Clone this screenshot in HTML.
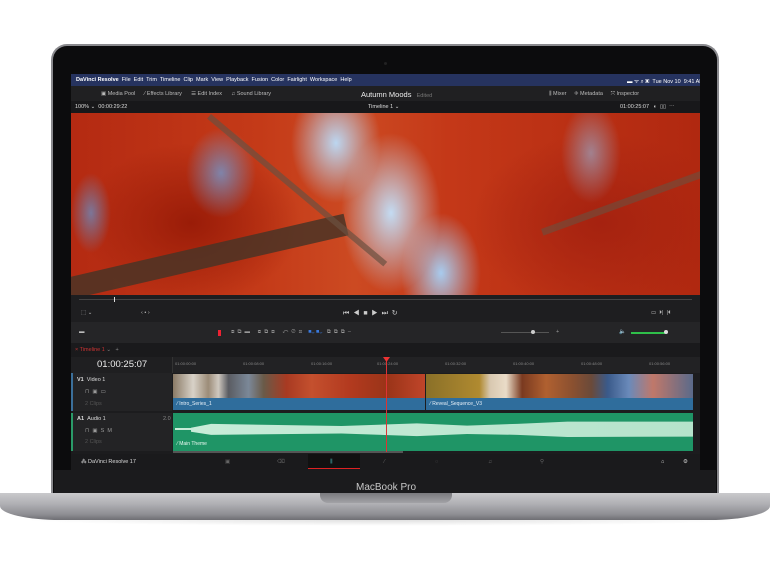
<!DOCTYPE html>
<html><head><meta charset="utf-8"><style>
*{margin:0;padding:0;box-sizing:border-box}
body{width:770px;height:578px;background:#fff;position:relative;overflow:hidden;font-family:"Liberation Sans",sans-serif;}
.a{position:absolute}
.t{position:absolute;font-size:5.5px;color:#bbb;white-space:nowrap}
</style></head><body>
<div class="a" style="left:51px;top:44px;width:668px;height:452px;border-radius:16px 16px 0 0;background:#0c0c0d;border:2px solid #8a8a8e;border-bottom:none"></div>
<div class="a" style="left:54px;top:470px;width:662px;height:24px;background:#1b1b1d"></div>
<div class="a" style="left:384px;top:62px;width:3px;height:3px;border-radius:50%;background:#222"></div>
<div class="t" style="left:356px;top:482px;font-size:10px;color:#c8c8c8">MacBook Pro</div>
<div class="a" style="left:0;top:493px;width:770px;height:27px;background:linear-gradient(#c9c9cc,#b0b0b4 40%,#8d8d92 80%,#6e6e73);border-radius:0 0 60px 60px/0 0 14px 14px"></div>
<div class="a" style="left:320px;top:493px;width:132px;height:10px;background:linear-gradient(#7a7a7e,#a2a2a6);border-radius:0 0 8px 8px"></div>
<div class="a" style="left:20px;top:520px;width:730px;height:6px;background:radial-gradient(ellipse at center top,rgba(0,0,0,.12),rgba(0,0,0,0) 70%)"></div>
<div class="a" style="left:71px;top:74px;width:629px;height:396px;background:#1c1c1e;overflow:hidden">
 <div class="a" style="left:0;top:0;width:629px;height:12px;background:#26335f"></div>
 <div class="t" style="left:5px;top:3px;color:#fff"> <b>DaVinci Resolve</b>&nbsp; File&nbsp; Edit&nbsp; Trim&nbsp; Timeline&nbsp; Clip&nbsp; Mark&nbsp; View&nbsp; Playback&nbsp; Fusion&nbsp; Color&nbsp; Fairlight&nbsp; Workspace&nbsp; Help</div>
 <div class="t" style="left:556px;top:3px;color:#fff">▬ ᯤ ⌕ ▣ &nbsp;Tue Nov 10 &nbsp;9:41 AM</div>
 <div class="a" style="left:0;top:12px;width:629px;height:15px;background:#202022"></div>
 <div class="t" style="left:30px;top:17px">▣ Media Pool &nbsp;&nbsp;&nbsp;&nbsp; ⁄ Effects Library &nbsp;&nbsp;&nbsp;&nbsp; ☰ Edit Index &nbsp;&nbsp;&nbsp;&nbsp; ♫ Sound Library</div>
 <div class="t" style="left:290px;top:16px;font-size:7.5px;color:#eee">Autumn Moods <span style="font-size:5.5px;color:#777">&nbsp; Edited</span></div>
 <div class="t" style="left:478px;top:17px">⫼ Mixer &nbsp;&nbsp;&nbsp; ◈ Metadata &nbsp;&nbsp;&nbsp; ⤧ Inspector</div>
 <div class="a" style="left:0;top:27px;width:629px;height:12px;background:#18181a"></div>
 <div class="t" style="left:4px;top:30px;color:#ddd">100% ⌄ &nbsp;00:00:29:22</div>
 <div class="t" style="left:297px;top:30px;color:#ddd">Timeline 1 ⌄</div>
 <div class="t" style="left:549px;top:30px;color:#ddd">01:00:25:07 &nbsp;&nbsp;◐ &nbsp;▯▯ &nbsp;⋯</div>
 <div class="a" style="left:0;top:39px;width:629px;height:182px;background:
  radial-gradient(ellipse 45px 60px at 265px 30px,#bcd6f0,rgba(160,195,235,0)),
  radial-gradient(ellipse 50px 80px at 320px 100px,#c4dbf2,rgba(140,185,232,0)),
  radial-gradient(ellipse 40px 60px at 370px 160px,#a8cbee,rgba(120,170,225,0)),
  radial-gradient(ellipse 35px 45px at 150px 60px,rgba(110,160,220,.75),rgba(0,0,0,0)),
  radial-gradient(ellipse 30px 50px at 520px 40px,rgba(150,185,225,.6),rgba(0,0,0,0)),
  radial-gradient(ellipse 20px 40px at 20px 100px,rgba(100,150,210,.7),rgba(0,0,0,0)),
  radial-gradient(ellipse 110px 80px at 120px 110px,#9a1c08,rgba(160,30,10,0)),
  radial-gradient(ellipse 130px 90px at 530px 110px,#a52210,rgba(170,35,12,0)),
  linear-gradient(90deg,#b42a12,#c43a18 30%,#cc4a22 45%,#c43818 60%,#b02810)"></div>
 <div class="a" style="left:-10px;top:205px;width:290px;height:22px;background:#4a3426;transform:rotate(-13deg);transform-origin:0 0;opacity:.85"></div>
 <div class="a" style="left:140px;top:40px;width:230px;height:6px;background:#6b5040;transform:rotate(40deg);transform-origin:0 0;opacity:.7"></div>
 <div class="a" style="left:470px;top:155px;width:170px;height:7px;background:#6b5040;transform:rotate(-20deg);transform-origin:0 0;opacity:.6"></div>
 <div class="a" style="left:0;top:221px;width:629px;height:27px;background:#1e1e20"></div>
 <div class="a" style="left:8px;top:225px;width:613px;height:1px;background:#444"></div>
 <div class="a" style="left:43px;top:223px;width:1px;height:5px;background:#ddd"></div>
 <div class="t" style="left:10px;top:236px">⬚ ⌄</div><div class="t" style="left:70px;top:236px">‹ • ›</div>
 <div class="t" style="left:272px;top:235px;font-size:7px;color:#ccc">⏮ &nbsp;◀ &nbsp;■ &nbsp;▶ &nbsp;⏭ &nbsp;↻</div>
 <div class="t" style="left:580px;top:236px">▭ &nbsp;⏵| &nbsp;|⏴</div>
 <div class="a" style="left:0;top:248px;width:629px;height:21px;background:#252527"></div>
 <div class="t" style="left:8px;top:255px">▬</div>
 <div class="a" style="left:147px;top:256px;width:3px;height:6px;background:#e23"></div>
 <div class="t" style="left:160px;top:255px;color:#999">⧈ &nbsp;⧉ &nbsp;▬ &nbsp;&nbsp;&nbsp; ⧈ &nbsp;⧉ &nbsp;⧈ &nbsp;&nbsp;&nbsp; ↶ &nbsp;⊘ &nbsp;⊡ &nbsp;&nbsp;&nbsp;<span style="color:#3a7be0">■⌄ ■⌄</span> &nbsp;&nbsp;⧉ &nbsp;⧉ &nbsp;⧉ &nbsp;–</div>
 <div class="t" style="left:485px;top:255px;color:#999">+</div>
 <div class="a" style="left:430px;top:258px;width:48px;height:1px;background:#555"></div>
 <div class="a" style="left:460px;top:256px;width:4px;height:4px;border-radius:50%;background:#ccc"></div>
 <div class="t" style="left:548px;top:255px;color:#ccc">🔈</div>
 <div class="a" style="left:560px;top:258px;width:34px;height:1.5px;background:#2fbf4a"></div>
 <div class="a" style="left:593px;top:256px;width:4px;height:4px;border-radius:50%;background:#ddd"></div>
 <div class="a" style="left:0;top:269px;width:629px;height:14px;background:#1a1a1c"></div>
 <div class="t" style="left:4px;top:273px;color:#c33">× Timeline 1 <span style="color:#888">⌄ &nbsp;&nbsp;+</span></div>
 <div class="a" style="left:0;top:283px;width:629px;height:16px;background:#1f1f21"></div>
 <div class="t" style="left:26px;top:285px;font-size:9.5px;color:#eee">01:00:25:07</div>
 <div class="a" style="left:101px;top:283px;width:528px;height:16px;background:#222224;border-left:1px solid #333"></div>
 <div class="t" style="left:104px;top:287px;font-size:4px;color:#888">01:00:00:00</div>
 <div class="t" style="left:172px;top:287px;font-size:4px;color:#888">01:00:08:00</div>
 <div class="t" style="left:240px;top:287px;font-size:4px;color:#888">01:00:16:00</div>
 <div class="t" style="left:306px;top:287px;font-size:4px;color:#888">01:00:24:00</div>
 <div class="t" style="left:374px;top:287px;font-size:4px;color:#888">01:00:32:00</div>
 <div class="t" style="left:442px;top:287px;font-size:4px;color:#888">01:00:40:00</div>
 <div class="t" style="left:510px;top:287px;font-size:4px;color:#888">01:00:48:00</div>
 <div class="t" style="left:578px;top:287px;font-size:4px;color:#888">01:00:56:00</div>
 <div class="a" style="left:0;top:299px;width:101px;height:38px;background:#232325;border-left:2px solid #3b6f9a"></div>
 <div class="t" style="left:6px;top:303px;color:#ddd"><b>V1</b> &nbsp;Video 1</div>
 <div class="t" style="left:14px;top:315px;color:#999">⊓ &nbsp;▣ &nbsp;▭</div>
 <div class="t" style="left:14px;top:327px;color:#555">2 Clips</div>
 <div class="a" style="left:0;top:339px;width:101px;height:38px;background:#232325;border-left:2px solid #2a9a68"></div>
 <div class="t" style="left:6px;top:342px;color:#ddd"><b>A1</b> &nbsp;Audio 1</div>
 <div class="t" style="left:92px;top:342px;color:#888">2.0</div>
 <div class="t" style="left:14px;top:354px;color:#999">⊓ &nbsp;▣ &nbsp;S &nbsp;M</div>
 <div class="t" style="left:14px;top:365px;color:#555">2 Clips</div>
 <div class="a" style="left:101px;top:299px;width:528px;height:80px;background:#1c1c1e"></div>
 <div class="a" style="left:102px;top:300px;width:252px;height:24px;background:linear-gradient(90deg,#8a7a66 0,#d8d2c8 8%,#9c8c78 14%,#cfc8bf 18%,#5a5c62 22%,#7b8898 30%,#6a5a48 36%,#a83a22 45%,#c4502e 55%,#b33a1f 70%,#9a3418 85%,#c0452a 100%)"></div>
 <div class="a" style="left:355px;top:300px;width:267px;height:24px;background:linear-gradient(90deg,#8a7028 0,#b08a30 20%,#d8c8b0 24%,#eadcc8 30%,#7a3a20 36%,#b06030 45%,#8a5030 55%,#6a4a3a 62%,#3a5a8a 68%,#6a8aba 76%,#c0786a 85%,#5a6a8a 100%)"></div>
 <div class="a" style="left:102px;top:324px;width:252px;height:12px;background:#2f6d9c"></div>
 <div class="a" style="left:355px;top:324px;width:267px;height:12px;background:#2f6d9c"></div>
 <div class="t" style="left:106px;top:327px;color:#e8f0f8;font-size:5px">⁄ Intro_Series_1</div>
 <div class="t" style="left:359px;top:327px;color:#e8f0f8;font-size:5px">⁄ Reveal_Sequence_V3</div>
 <div class="a" style="left:102px;top:339px;width:520px;height:38px;background:#1f9566"></div>
 <div class="a" style="left:120px;top:345px;width:502px;height:22px;background:linear-gradient(90deg,#c8ecd9,#b5e3cb);clip-path:polygon(0 40%,4% 22%,30% 32%,45% 20%,55% 30%,65% 22%,75% 12%,100% 12%,100% 80%,75% 82%,65% 72%,55% 68%,45% 78%,30% 66%,4% 72%,0 58%)"></div>
 <div class="a" style="left:104px;top:354px;width:16px;height:2px;background:#c8ecd9"></div>
 <div class="t" style="left:106px;top:367px;color:#e8f8f0;font-size:5px">⁄ Main Theme</div>
 <div class="a" style="left:102px;top:377px;width:230px;height:2px;background:#555"></div>
 <div class="a" style="left:315px;top:284px;width:1px;height:94px;background:#d33"></div>
 <div class="a" style="left:312px;top:283px;width:7px;height:5px;background:#e33;clip-path:polygon(0 0,100% 0,50% 100%)"></div>
 <div class="a" style="left:0;top:380px;width:629px;height:16px;background:#1a1a1c"></div>
 <div class="t" style="left:10px;top:385px;color:#ddd">⁂ DaVinci Resolve 17</div>
 <div class="a" style="left:237px;top:380px;width:52px;height:15px;background:#111"></div>
 <div class="a" style="left:237px;top:394px;width:52px;height:1px;background:#d22"></div>
 <div class="t" style="left:154px;top:385px;color:#666">▣</div>
 <div class="t" style="left:206px;top:385px;color:#666">⌫</div>
 <div class="t" style="left:259px;top:385px;color:#4aa">⫼</div>
 <div class="t" style="left:313px;top:385px;color:#666">⁄</div>
 <div class="t" style="left:364px;top:385px;color:#666">◌</div>
 <div class="t" style="left:417px;top:385px;color:#666">♫</div>
 <div class="t" style="left:469px;top:385px;color:#666">⚲</div>
 <div class="t" style="left:590px;top:385px;color:#ccc">⌂</div>
 <div class="t" style="left:612px;top:385px;color:#ccc">⚙</div>
</div>
</body></html>
